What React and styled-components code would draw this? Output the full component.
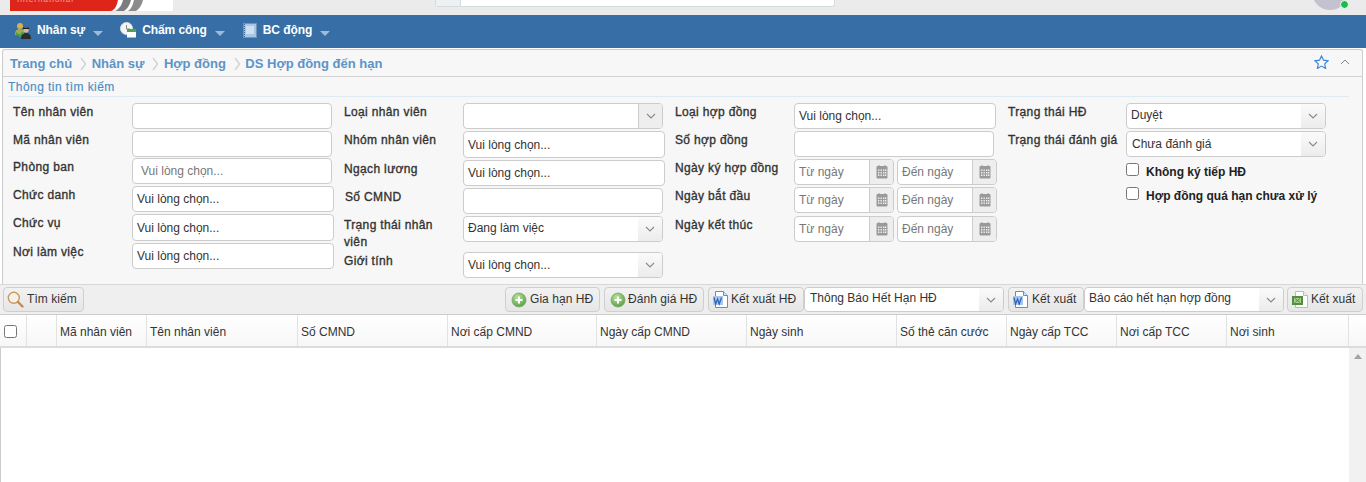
import React from "react";
import styled, { createGlobalStyle } from "styled-components";

const Global = createGlobalStyle`
  html, body { margin: 0; padding: 0; background: #fff; }
  body { font-family: "Liberation Sans", Arial, sans-serif; font-size: 12px; color: #333; }
  * { box-sizing: border-box; }
`;

const Page = styled.div`
  width: 1366px; height: 482px; overflow: hidden; background: #fff;
`;
const TopBar = styled.header`
  position: relative; height: 15px; background: #ebebeb; display: flex; align-items: flex-start; overflow: hidden;
`;
const Logo = styled.svg`
  display: block; width: 163px; height: 11px; margin-left: 10px; flex: none;
`;
const SearchBox = styled.div`
  width: 400px; height: 7px; margin-left: 262px; background: #fff; display: flex; flex: none;
  border: 1px solid #d3dde0; border-top: 0; border-radius: 0 0 3px 3px;
`;
const SearchAddon = styled.div`
  width: 25px; background: #edf1f1; border-right: 1px solid #d3dde0;
`;
const Avatar = styled.div`
  width: 36px; height: 36px; border-radius: 50%; background: #c4c2cf; margin: -26px 0 0 477px; flex: none;
`;
const OnlineDot = styled.span`
  position: absolute; left: 1340px; top: 0; width: 9px; height: 9px; border-radius: 50%;
  background: #22b84c; border: 1.5px solid #fff;
`;
const NavBar = styled.nav`
  height: 33px; background: #366ea5; display: flex; align-items: center; padding-left: 15px;
`;
const NavItem = styled.div`
  display: flex; align-items: center; margin-right: ${p => p.$mr}px; height: 100%;
  color: #fff; font-size: 12px; font-weight: 700; letter-spacing: -.08px; padding-bottom: 3px;
  svg.ic { margin-right: ${p => p.$gap}px; flex: none; }
`;
const Caret = styled.span`
  width: 0; height: 0; margin-left: 8px; margin-top: 6px;
  border-left: 5px solid transparent; border-right: 5px solid transparent; border-top: 5px solid #9dbcdb;
`;
const Panel = styled.section`
  margin: 1px 3px 0 2px; height: 235px; background: #f7f7f7; border: 1px solid #ccc; border-bottom: 0;
  border-radius: 3px 3px 0 0;
`;
const Breadcrumb = styled.div`
  height: 27px; border-bottom: 1px solid #d2d2d2; display: flex; align-items: center; padding: 0 12px 0 7px;
  font-size: 13px; font-weight: 700; color: #5c94c8;
`;
const Crumb = styled.span`white-space: nowrap;`;
const Sep = styled.svg`width: 7px; height: 14px; margin: 2px 4.5px 0 8px; flex: none;`;
const CrumbTools = styled.div`margin-left: auto; display: flex; align-items: center; gap: 11px; margin-bottom: 2px;`;
const SectionTitle = styled.div`
  margin-left: 5px; margin-right: 13px; height: 20px; line-height: 20px; color: #4a8ec2; font-size: 12px;
  letter-spacing: .45px; -webkit-text-stroke: .15px #4a8ec2; border-bottom: 1px solid #dde9f3;
`;
const FormGrid = styled.div`
  display: flex; padding: 6px 0 0 10px;
`;
const Column = styled.div`
  width: ${p => p.$w}px; flex: none; display: flex; flex-direction: column;
`;
const Row = styled.div`
  display: flex; align-items: flex-start; height: ${p => p.$h || 28}px; flex: none;
`;
const Label = styled.div`
  width: 119px; flex: none; font-size: 12px; line-height: 17px; color: #333; letter-spacing: .35px;
  -webkit-text-stroke: .35px #333; padding: 1px 8px 0 ${p => p.$pl || 0}px;
`;
const Box = styled.div`
  width: ${p => p.$w || 200}px; height: ${p => p.$h || 26}px; background: #fff; border: 1px solid #ccc; border-radius: 4px;
  display: flex; align-items: center; overflow: hidden; flex: none;
  font-size: 12px; color: #333;
`;
const BoxText = styled.span`
  flex: 1; padding-left: ${p => p.$pl || 4}px; white-space: nowrap; overflow: hidden;
  color: ${p => (p.$muted ? "#777" : "#333")};
  margin-top: ${p => p.$mt || 0}px;
`;
const Addon = styled.span`
  width: 24px; flex: none; height: 100%; display: flex; align-items: center; justify-content: center;
  background: ${p => (p.$plain ? "linear-gradient(#fafafa,#ececec)" : "#eee")};
  border-left: ${p => (p.$plain ? "0" : "1px solid #ccc")};
`;
const DateRow = styled.div`display: flex; gap: 3px;`;
const Check = styled.span`
  width: 13px; height: 13px; border: 1px solid #767676; border-radius: 2.5px; background: #fff; flex: none; display: block;
`;
const CheckRow = styled.div`
  display: flex; align-items: flex-start; height: ${p => p.$h}px; padding: ${p => p.$pt}px 0 0 119px; gap: 7px;
`;
const CheckLabel = styled.span`
  font-size: 12px; font-weight: 700; color: #222; line-height: 17px; white-space: nowrap;
  margin-top: ${p => p.$mt || 0}px;
`;
const Toolbar = styled.div`
  height: 31px; background: #efefef; border-top: 1px solid #d8d8d8; border-bottom: 1px solid #ccc;
  display: flex; align-items: center; padding: 0 3px;
`;
const Button = styled.div`
  height: 25px; display: flex; align-items: center; flex: none; width: ${p => p.$w}px; margin-left: ${p => p.$ml || 0}px;
  background: linear-gradient(#f2f2f2, #e6e6e6); border: 1px solid #cfcfcf; border-radius: 4px;
  font-size: 12px; color: #333; letter-spacing: .05px; padding: 0 0 2px ${p => p.$pl || 5}px; gap: ${p => p.$gap || 4}px; white-space: nowrap;
  svg { margin-top: 2px; }
`;
const ToolSelect = styled(Box)`height: 25px;`;
const Spacer = styled.div`flex: 1;`;
const TableHead = styled.div`
  display: grid; height: 33px; border-bottom: 2px solid #dcdcdc; background: linear-gradient(#fff,#f7f7f7);
  grid-template-columns: 27px 30px 90px 151px 150px 149px 150px 150px 110px 110px 110px 122px 17px;
`;
const HeadCell = styled.div`
  display: flex; align-items: center; padding: 2px 0 0 ${p => p.$pl ?? 3}px; border-right: ${p => (p.$last ? 0 : "1px solid #e2e2e2")};
  font-size: 12px; color: #333; white-space: nowrap; overflow: hidden;
`;
const TableBody = styled.div`
  display: flex; height: 136px; border-left: 1px solid #ccc;
`;
const Rows = styled.div`flex: 1;`;
const Scrollbar = styled.div`
  width: 17px; background: #f1f1f1; display: flex; justify-content: center; padding-top: 6px;
`;
const ScrollArrow = styled.span`
  width: 0; height: 0; border-left: 4px solid transparent; border-right: 4px solid transparent; border-bottom: 5px solid #a3a3a3;
`;

const Chevron = () => (
  <svg width="10" height="6" viewBox="0 0 10 6" fill="none"><path d="M1 1l4 4 4-4" stroke="#8a8a8a" strokeWidth="1.1" /></svg>
);
const Calendar = () => (
  <svg width="12" height="14" viewBox="0 0 12 14">
    <rect x=".5" y="1" width="11" height="12.5" rx="1" fill="#9a9a9a" />
    <rect x="2.5" y="0" width="1" height="2" fill="#9a9a9a" /><rect x="8.5" y="0" width="1" height="2" fill="#9a9a9a" />
    <g fill="#eee">
      {[4.5, 7, 9.5].flatMap(y => [2, 4.5, 7, 9].map(x => <rect key={`${x}-${y}`} x={x} y={y} width="1.4" height="1.5" />))}
    </g>
  </svg>
);
const PlusIcon = () => (
  <svg width="16" height="16" viewBox="0 0 16 16">
    <defs><radialGradient id="gr" cx=".4" cy=".3" r=".8"><stop offset="0" stopColor="#b9e39a" /><stop offset="1" stopColor="#4f9a3c" /></radialGradient></defs>
    <circle cx="8" cy="8" r="7" fill="url(#gr)" stroke="#7aa56a" strokeWidth=".8" />
    <path d="M8 4.5v7M4.5 8h7" stroke="#fff" strokeWidth="2" />
  </svg>
);
const WordIcon = () => (
  <svg width="15" height="17" viewBox="0 0 15 17">
    <path d="M2.5 .5h8l4 4v12h-12z" fill="#fff" stroke="#5b8fd0" />
    <path d="M10.5 .5v4h4" fill="#d4e3f6" stroke="#5b8fd0" />
    <rect x="0" y="5" width="10" height="9" fill="#a9c6ec" />
    <path d="M1 6.5l1.6 6.5 2-5 1.6 5 2.3-6.5" fill="none" stroke="#2a62b8" strokeWidth="1.2" />
  </svg>
);
const ExcelIcon = () => (
  <svg width="16" height="17" viewBox="0 0 16 17">
    <path d="M3.5 .5h8l4 4v12h-12z" fill="#fff" stroke="#bbb" />
    <path d="M11.5 .5v4h4" fill="#eee" stroke="#bbb" />
    <rect x="0" y="5" width="11" height="9" fill="#4f8f3f" />
    <path d="M2 7h7v5H2z" fill="#a8cf92" />
    <path d="M3 7.500l5 4M8 7.500l-5 4" stroke="#3d7a30" strokeWidth=".8" />
  </svg>
);
const SearchIcon = () => (
  <svg width="17" height="17" viewBox="0 0 17 17" fill="none">
    <circle cx="6.8" cy="6.8" r="5.5" stroke="#c79a5e" strokeWidth="1.4" fill="#f6f1e8" />
    <path d="M11 11l4.500 4.500" stroke="#c98a45" strokeWidth="2.400" strokeLinecap="round" />
  </svg>
);
const PeopleIcon = () => (
  <svg className="ic" width="16" height="17" viewBox="0 0 16 17">
    <circle cx="5" cy="4" r="3" fill="#d7b24a" /><path d="M0 12c0-3.500 2-5 5-5s4 2 4 4v2H0z" fill="#a9a94e" />
    <path d="M1 11l4 3 3-4" fill="none" stroke="#3ea53e" strokeWidth="2" />
    <circle cx="11" cy="8" r="2.700" fill="#d8b89a" /><path d="M6 17c0-4 2-6 5-6s5 2 5 6z" fill="#2c2c2c" /><path d="M8 5.500h6v1.500H8z" fill="#222" />
  </svg>
);
const ClockIcon = () => (
  <svg className="ic" width="16" height="16" viewBox="0 0 16 16">
    <circle cx="6.500" cy="6.500" r="6" fill="#f4f4f4" stroke="#d5dfe8" />
    <path d="M6.500 3v4h3.500" fill="none" stroke="#888" />
    <rect x="7" y="7" width="9" height="8.500" fill="#fff" /><rect x="7" y="7" width="9" height="3" fill="#4ba34b" />
  </svg>
);
const BookIcon = () => (
  <svg className="ic" width="14" height="15" viewBox="0 0 14 15">
    <rect x=".5" y=".5" width="13" height="14" fill="#a9c6e6" stroke="#6f95bd" />
    <rect x="3" y="3" width="8" height="8" fill="#cfe0f1" />
    <path d="M1.500 1v13" stroke="#3f6891" strokeDasharray="1 1" />
  </svg>
);
const CrumbSep = () => (
  <Sep viewBox="0 0 7 14" fill="none"><path d="M1 1l4.500 6L1 13" stroke="#d5d5d5" strokeWidth="1.6" /></Sep>
);

const TextField = ({ text, w, h, muted, pl }) => (
  <Box $w={w} $h={h}><BoxText $muted={muted} $pl={pl}>{text}</BoxText></Box>
);
const SelectField = ({ text, plain, mt, pl }) => (
  <Box>
    <BoxText $mt={mt} $pl={pl}>{text}</BoxText>
    <Addon $plain={plain}><Chevron /></Addon>
  </Box>
);
const DateField = ({ text }) => (
  <Box $w={100}>
    <BoxText $muted>{text}</BoxText>
    <Addon><Calendar /></Addon>
  </Box>
);
const DateRange = () => (
  <DateRow><DateField text="Từ ngày" /><DateField text="Đến ngày" /></DateRow>
);

const PICK = "Vui lòng chọn...";
const HEADERS = ["Mã nhân viên", "Tên nhân viên", "Số CMND", "Nơi cấp CMND", "Ngày cấp CMND", "Ngày sinh", "Số thẻ căn cước", "Ngày cấp TCC", "Nơi cấp TCC", "Nơi sinh"];

export default function App() {
  return (
    <Page>
      <Global />
      <TopBar>
        <Logo viewBox="0 0 163 11">
          <rect width="163" height="11" fill="#fff" />
          <path d="M0 0h108c-1 5-3 10-7 11H0z" fill="#dd2519" />
          <text x="7" y="2" fontSize="8" fill="#f0a79f" fontFamily="Liberation Sans, sans-serif" letterSpacing="1">International</text>
          <path d="M113 0h8c-1 5-4 9-7 11h-9c4-2 7-6 8-11z" fill="#7d7d7d" />
          <path d="M124 0h9c-1 5-4 9-7 11h-8c3-2 5-6 6-11z" fill="#8c8c8c" />
        </Logo>
        <SearchBox><SearchAddon /></SearchBox>
        <Avatar />
        <OnlineDot />
      </TopBar>
      <NavBar>
        <NavItem $mr={17} $gap={6}><PeopleIcon />Nhân sự<Caret /></NavItem>
        <NavItem $mr={18} $gap={6}><ClockIcon />Chấm công<Caret /></NavItem>
        <NavItem $mr={0} $gap={6}><BookIcon />BC động<Caret /></NavItem>
      </NavBar>
      <Panel>
        <Breadcrumb>
          <Crumb>Trang chủ</Crumb><CrumbSep />
          <Crumb>Nhân sự</Crumb><CrumbSep />
          <Crumb>Hợp đồng</Crumb><CrumbSep />
          <Crumb>DS Hợp đồng đến hạn</Crumb>
          <CrumbTools>
            <svg width="15" height="14" viewBox="0 0 15 14" fill="none"><path d="M7.500 1l2 4.200 4.500.6-3.300 3.100.9 4.500-4.100-2.300-4.100 2.300.9-4.500L1 5.800l4.500-.6z" stroke="#3f86d6" strokeWidth="1.200" /></svg>
            <svg width="10" height="6" viewBox="0 0 10 6" fill="none"><path d="M1 5l4-4 4 4" stroke="#888" /></svg>
          </CrumbTools>
        </Breadcrumb>
        <SectionTitle>Thông tin tìm kiếm</SectionTitle>
        <FormGrid>
          <Column $w={331}>
            <Row><Label>Tên nhân viên</Label><TextField /></Row>
            <Row $h={27}><Label>Mã nhân viên</Label><TextField /></Row>
            <Row><Label>Phòng ban</Label><TextField text={PICK} muted pl={8} /></Row>
            <Row><Label>Chức danh</Label><TextField text={PICK} w={202} /></Row>
            <Row $h={29}><Label>Chức vụ</Label><TextField text={PICK} w={202} h={27} /></Row>
            <Row><Label>Nơi làm việc</Label><TextField text={PICK} w={202} /></Row>
          </Column>
          <Column $w={331}>
            <Row><Label>Loại nhân viên</Label><SelectField /></Row>
            <Row $h={29}><Label>Nhóm nhân viên</Label><TextField text={PICK} w={202} h={27} /></Row>
            <Row><Label>Ngạch lương</Label><TextField text={PICK} w={202} /></Row>
            <Row><Label $pl={1}>Số CMND</Label><TextField /></Row>
            <Row $h={36}><Label>Trạng thái nhân viên</Label><SelectField text="Đang làm việc" plain mt={-2} /></Row>
            <Row><Label>Giới tính</Label><SelectField text={PICK} plain /></Row>
          </Column>
          <Column $w={332}>
            <Row><Label>Loại hợp đồng</Label><TextField text={PICK} w={202} /></Row>
            <Row><Label>Số hợp đồng</Label><TextField /></Row>
            <Row><Label>Ngày ký hợp đồng</Label><DateRange /></Row>
            <Row $h={29}><Label>Ngày bắt đầu</Label><DateRange /></Row>
            <Row><Label>Ngày kết thúc</Label><DateRange /></Row>
          </Column>
          <Column $w={330}>
            <Row><Label $pl={1}>Trạng thái HĐ</Label><SelectField text="Duyệt" plain mt={-2} /></Row>
            <Row><Label $pl={1}>Trạng thái đánh giá</Label><SelectField text="Chưa đánh giá" plain pl={5} mt={-1} /></Row>
            <CheckRow $h={25} $pt={4}><Check /><CheckLabel $mt={1}>Không ký tiếp HĐ</CheckLabel></CheckRow>
            <CheckRow $h={25} $pt={3}><Check /><CheckLabel $mt={1}>Hợp đồng quá hạn chưa xử lý</CheckLabel></CheckRow>
          </Column>
        </FormGrid>
      </Panel>
      <Toolbar>
        <Button $w={81} $pl={3} $gap={3}><SearchIcon />Tìm kiếm</Button>
        <Spacer />
        <Button $w={95} $pl={5} $gap={3}><PlusIcon />Gia hạn HĐ</Button>
        <Button $w={100} $ml={4} $pl={5} $gap={2}><PlusIcon />Đánh giá HĐ</Button>
        <Button $w={96} $ml={4} $pl={4} $gap={3}><WordIcon />Kết xuất HĐ</Button>
        <ToolSelect $w={200} $h={25}><BoxText $pl={5} $mt={-3}>Thông Báo Hết Hạn HĐ</BoxText><Addon $plain><Chevron /></Addon></ToolSelect>
        <Button $w={76} $ml={4} $pl={4}><WordIcon />Kết xuất</Button>
        <ToolSelect $w={200} $h={25}><BoxText $pl={4} $mt={-3}>Báo cáo hết hạn hợp đồng</BoxText><Addon $plain><Chevron /></Addon></ToolSelect>
        <Button $w={76} $ml={3} $pl={4} $gap={3}><ExcelIcon />Kết xuất</Button>
      </Toolbar>
      <TableHead>
        <HeadCell $pl={4}><Check /></HeadCell>
        <HeadCell />
        {HEADERS.map(h => <HeadCell key={h}>{h}</HeadCell>)}
        <HeadCell $last />
      </TableHead>
      <TableBody>
        <Rows />
        <Scrollbar><ScrollArrow /></Scrollbar>
      </TableBody>
    </Page>
  );
}
